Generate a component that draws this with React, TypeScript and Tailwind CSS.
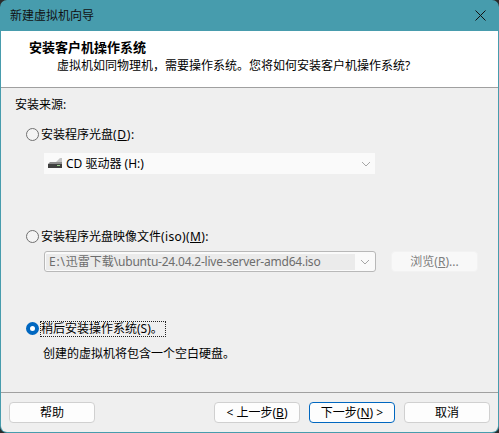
import React from 'react';

const font = { fontFamily: '"Noto Sans", "Noto Sans CJK SC", "Liberation Sans", sans-serif' };

const Radio = ({ checked }: { checked?: boolean }) =>
  checked ? (
    <span className="block w-[13px] h-[13px] rounded-full border-[4px] border-[#0067c0] bg-white shrink-0" />
  ) : (
    <span className="block w-[13px] h-[13px] rounded-full border border-[#707070] bg-[#f4f4f4] shrink-0" />
  );

const Chevron = () => (
  <svg width="10" height="6" viewBox="0 0 10 6" className="shrink-0">
    <path d="M1 1l4 4 4-4" fill="none" stroke="#a6a6a6" strokeWidth="1" />
  </svg>
);

const DriveIcon = () => (
  <svg width="16" height="13" viewBox="0 0 16 13" className="shrink-0">
    <path d="M9 5l4-4h2v4z" fill="#c4c4c4" />
    <path d="M1 7l2-2h12v2z" fill="#8c8c8c" />
    <rect x="1" y="7" width="14" height="4" fill="#3f3f3f" />
    <rect x="10" y="8" width="3" height="1" fill="#9bd08f" />
  </svg>
);

const Btn = ({ children, primary }: { children: React.ReactNode; primary?: boolean }) => (
  <button
    className={`w-[86px] h-[21px] rounded-[4px] border bg-[#fdfdfd] text-[12px] leading-none text-black flex items-center justify-center ${
      primary ? 'border-[#0067c0]' : 'border-[#d0d0d0]'
    }`}
  >
    {children}
  </button>
);

export default function App() {
  return (
    <div className="w-[499px] h-[433px] bg-[#2b2b2b] overflow-hidden" style={font}>
      <div className="w-full h-full rounded-[7px] bg-[#479cad] px-px pb-px flex flex-col overflow-hidden">
        <div className="h-[31px] shrink-0 flex items-center justify-between pl-[9px] pr-[12px] text-[12px] text-[#111]">
          <span>新建虚拟机向导</span>
          <svg width="11" height="11" viewBox="0 0 11 11">
            <path d="M0.5 0.5l10 10M10.5 0.5l-10 10" stroke="#111" strokeWidth="1" />
          </svg>
        </div>

        <div className="h-[57px] shrink-0 bg-white border-b border-b-[#a0a0a0] pl-[28px] pt-[8px] text-[12px] text-black">
          <div className="font-bold text-[13px] leading-[17px]">安装客户机操作系统</div>
          <div className="pl-[28px] leading-[19px] whitespace-nowrap">{'虚拟机如同物理机\uFF0C需要操作系统。您将如何安装客户机操作系统?'}</div>
        </div>

        <div className="flex-1 bg-[#efefef] flex flex-col text-[12px] text-black rounded-b-[6px]">
          <div className="h-[305px] pl-[14px] pt-[8px] border-b border-b-[#a0a0a0] shrink-0">
            <div className="leading-[17px]">安装来源:</div>

            <div className="pl-[11px] mt-[13px] flex items-center gap-[2px] h-[17px]">
              <Radio />
              <span>安装程序光盘<span className="tracking-[0.7px]">(<u>D</u>):</span></span>
            </div>
            <div className="ml-[29px] mt-[10px] w-[331px] h-[21px] bg-[#fafafa] flex items-center justify-between pl-[3px] pr-[4px]">
              <div className="flex items-center gap-[3px]">
                <DriveIcon />
                <span>CD 驱动器 (H:)</span>
              </div>
              <Chevron />
            </div>

            <div className="pl-[11px] mt-[54px] flex items-center gap-[2px] h-[17px]">
              <Radio />
              <span>安装程序光盘映像文件<span className="tracking-[0.35px]">(iso)(<u>M</u>):</span></span>
            </div>
            <div className="ml-[29px] mt-[6px] flex items-center gap-[15px]">
              <div className="w-[332px] h-[21px] rounded-[3px] border border-[#b8b8b8] bg-[#fafafa] flex items-center justify-between p-[1px] pr-[5px]">
                <div className="w-[309px] h-[16px] bg-[#ebebeb] flex items-center pl-[3px] text-[12px] text-[#6d6d6d] whitespace-nowrap overflow-hidden">
                  <span className="tracking-[0.8px]">E:\</span>
                  <span>迅雷下载</span>
                  <span className="tracking-[-0.22px]">\ubuntu-24.04.2-live-server-amd64.iso</span>
                </div>
                <Chevron />
              </div>
              <div className="w-[87px] h-[21px] rounded-[4px] bg-[#f8f8f8] border border-[#f2f2f2] flex items-center justify-center text-[#7d7d7d]">
                浏览(<u>R</u>)...
              </div>
            </div>

            <div className="pl-[11px] mt-[48px] flex items-center gap-[2px] h-[17px]">
              <Radio checked />
              <span className="outline-1 outline-dotted outline-[#222] leading-[14px] whitespace-nowrap pr-[2px]">稍后安装操作系统(S)。</span>
            </div>
            <div className="pl-[28px] mt-[8px] leading-[17px]">创建的虚拟机将包含一个空白硬盘。</div>
          </div>

          <div className="flex-1 flex items-start justify-between px-[8px] pt-[9px]">
            <Btn>帮助</Btn>
            <div className="flex gap-[9px]">
              <Btn>&lt; 上一步(<u>B</u>)</Btn>
              <Btn primary>下一步(<u>N</u>) &gt;</Btn>
              <Btn>取消</Btn>
            </div>
          </div>
        </div>
      </div>
    </div>
  );
}
